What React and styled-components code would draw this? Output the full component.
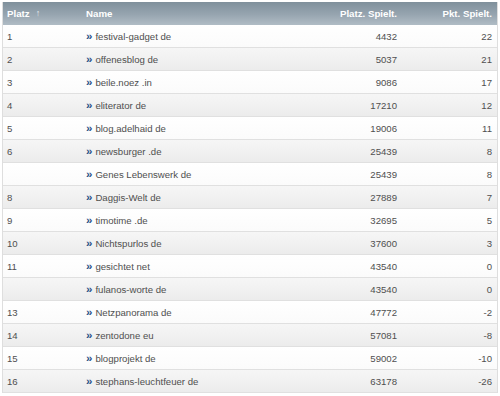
import React from "react";
import styled, { createGlobalStyle } from "styled-components";

const Global = createGlobalStyle`
  html, body { margin: 0; padding: 0; background: #fff; }
  body { font-family: "Liberation Sans", Arial, sans-serif; }
`;

const Table = styled.div`
  margin: 2px 2px 0 2px;
  width: 496px;
  display: grid;
  grid-template-columns: 79px 1fr 115px 95px;
  border-left: 1px solid #dedede;
  border-right: 1px solid #dedede;
  box-sizing: border-box;
  font-size: 9.6px;
  color: #4f4f4f;
`;

const Row = styled.div`
  display: contents;
`;

const HeadCell = styled.div`
  height: 22px;
  display: flex;
  align-items: center;
  justify-content: ${(p) => (p.$right ? "flex-end" : "flex-start")};
  padding: ${(p) => (p.$right ? "0 5px 1px 0" : "0 0 1px 4px")};
  background: linear-gradient(to bottom, #7f909c 0%, #97a5b0 55%, #b0bcc5 100%);
  color: #fff;
  font-weight: bold;
  font-size: 9.7px;
`;

const SortMark = styled.span`
  margin-left: 6px;
  font-size: 9px;
  font-weight: bold;
  color: #e6ebef;
`;

const Cell = styled.div`
  height: 23px;
  box-sizing: border-box;
  border-bottom: 1px solid #e0e0e0;
  display: flex;
  align-items: center;
  justify-content: ${(p) => (p.$right ? "flex-end" : "flex-start")};
  padding: ${(p) => (p.$right ? "0 5px 0 0" : "0 0 0 4px")};
  background: ${(p) =>
    p.$alt
      ? "linear-gradient(to bottom, #f6f6f6 0%, #ececec 100%)"
      : "linear-gradient(to bottom, #ffffff 0%, #fbfbfb 100%)"};
`;

const Arrow = styled.span`
  color: #2b5187;
  font-weight: bold;
  font-size: 11.5px;
  line-height: 1;
  margin-right: 3px;
  position: relative;
  top: 1px;
`;

const rows = [
  ["1", "festival-gadget de", "4432", "22"],
  ["2", "offenesblog de", "5037", "21"],
  ["3", "beile.noez .in", "9086", "17"],
  ["4", "eliterator de", "17210", "12"],
  ["5", "blog.adelhaid de", "19006", "11"],
  ["6", "newsburger .de", "25439", "8"],
  ["", "Genes Lebenswerk de", "25439", "8"],
  ["8", "Daggis-Welt de", "27889", "7"],
  ["9", "timotime .de", "32695", "5"],
  ["10", "Nichtspurlos de", "37600", "3"],
  ["11", "gesichtet net", "43540", "0"],
  ["", "fulanos-worte de", "43540", "0"],
  ["13", "Netzpanorama de", "47772", "-2"],
  ["14", "zentodone eu", "57081", "-8"],
  ["15", "blogprojekt de", "59002", "-10"],
  ["16", "stephans-leuchtfeuer de", "63178", "-26"],
];

export default function App() {
  return (
    <>
      <Global />
      <Table>
        <Row>
          <HeadCell>
            Platz<SortMark>↑</SortMark>
          </HeadCell>
          <HeadCell>Name</HeadCell>
          <HeadCell $right>Platz. Spielt.</HeadCell>
          <HeadCell $right>Pkt. Spielt.</HeadCell>
        </Row>
        {rows.map((r, i) => {
          const alt = i % 2 === 1;
          return (
            <Row key={i}>
              <Cell $alt={alt}>{r[0]}</Cell>
              <Cell $alt={alt}>
                <Arrow>»</Arrow>
                {r[1]}
              </Cell>
              <Cell $alt={alt} $right>{r[2]}</Cell>
              <Cell $alt={alt} $right>{r[3]}</Cell>
            </Row>
          );
        })}
      </Table>
    </>
  );
}
